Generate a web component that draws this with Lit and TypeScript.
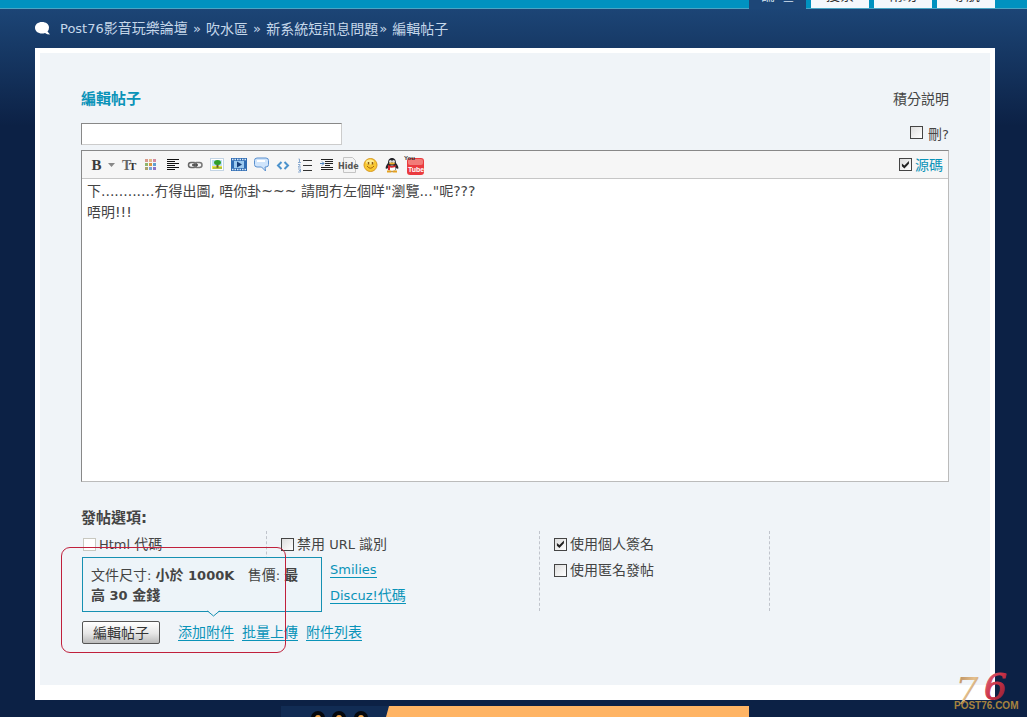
import { LitElement, html, css, svg } from "lit";
import { customElement, property } from "lit/decorators.js";

const palette = ["#d99a8a", "#e2b78a", "#d68ba0", "#8fb56a", "#d9953f", "#5f9fd0", "#a9a26c", "#79a5d8", "#8b76c4"];

const glyphs: Record<string, unknown> = {
  bold: svg`<text x="2.500" y="13" font-family="Liberation Serif, serif" font-weight="700" font-size="15" fill="#3c3c3c">B</text>`,
  arrow: svg`<path d="M0 6h7L3.500 10z" fill="#888"/>`,
  font: svg`<text x="1" y="13" font-family="Liberation Serif, serif" font-weight="700" font-size="14" fill="#666">T</text><text x="8" y="13" font-family="Liberation Serif, serif" font-weight="700" font-size="11" fill="#333">T</text>`,
  color: palette.map((c, i) => svg`<rect x=${2 + (i % 3) * 4} y=${2 + Math.floor(i / 3) * 4} width="3" height="3" fill=${c}/>`),
  align: svg`<path d="M2 2.500h12M2 4.500h8M2 6.500h12M2 8.500h8M2 10.500h12M2 12.500h8" stroke="#111" fill="none"/>`,
  link: svg`<rect x="1.500" y="5.500" width="8" height="5" rx="2.500" fill="none" stroke="#666" stroke-width="1.500"/><rect x="7" y="5.500" width="8" height="5" rx="2.500" fill="none" stroke="#777" stroke-width="1.500"/><path d="M5 8h6" stroke="#444" stroke-width="1.500"/>`,
  image: svg`<rect x="1.500" y="1.500" width="13" height="12" fill="#fff" stroke="#c3d4e4"/><rect x="3" y="3" width="10" height="6" fill="#bfe0f5"/><rect x="3" y="9" width="10" height="3" fill="#f1e34c"/><path d="M7.500 7h2v4h-2z" fill="#6d5a20"/><ellipse cx="8.500" cy="5.500" rx="3.500" ry="2.500" fill="#2f9f2b"/><path d="M4 11h9" stroke="#71a52e"/>`,
  video: svg`<rect x="0" y="1" width="16" height="13" fill="#2f6cb3"/><path d="M1 2.500h14M1 12.500h14" stroke="#d7e8f8" stroke-width="1.500" stroke-dasharray="1.500 1"/><rect x="3" y="4" width="10" height="7" fill="#9cc9ee"/><path d="M6 4.500l5 3-5 3z" fill="#173f7a"/>`,
  quote: svg`<path d="M4 1h9q2.500 0 2.500 2.500v4Q15.500 10 13 10h-1l.5 4L8.500 10H4Q1.500 10 1.500 7.500v-4Q1.500 1 4 1z" fill="#cfe4fb" stroke="#5a90cf"/><path d="M4 4h8" stroke="#fff" stroke-width="2"/>`,
  code: svg`<path d="M6.500 5L3 8.500l3.500 3.500M9.500 5L13 8.500 9.500 12" fill="none" stroke="#4b92cc" stroke-width="2"/>`,
  list: svg`<path d="M6 3.500h9M6 8.500h9M6 13.500h9" stroke="#333"/><path d="M1.500 2h1v3M1 5.500h3M1 7.500h2v1l-2 1.500h3M1 12h2.500v3H1M2 13.500h1" stroke="#8aaad0" fill="none"/>`,
  indent: svg`<path d="M2 2.500h12M6 4.500h8M6 6.500h8M6 8.500h5M2 10.500h12M2 12.500h12" stroke="#222"/><path d="M1 6.500h4M3 4.500l2 2-2 2" stroke="#4b83bd" fill="none"/>`,
  smile: svg`<circle cx="7.500" cy="8" r="6.500" fill="#f8c832" stroke="#d99a20"/><ellipse cx="7" cy="5" rx="4" ry="2.500" fill="#fdeb90"/><path d="M5.500 5v2.500M9.500 5v2.500" stroke="#8a5a10" stroke-width="1.500"/><path d="M4 9q3.500 4.500 7 0" stroke="#a8650c" fill="none"/>`,
  penguin: svg`<path d="M7 1C4 1 3 3.500 3 6 1 8.500 0 11 1 12l1.500-1Q4 15 7 15t4.500-4L13 12c1-1 0-3.500-2-6 0-2.500-1-5-4-5z" fill="#25252b"/><ellipse cx="7" cy="11.500" rx="3.500" ry="3" fill="#fff"/><circle cx="5.500" cy="4.500" r="1.500" fill="#ddd"/><circle cx="8.500" cy="4.500" r="1.500" fill="#ddd"/><ellipse cx="7" cy="6.500" rx="3" ry="1" fill="#efb12d"/><path d="M3 8q4 2 8 0l-.5 2q-3.500 1-5.500.5V13H3z" fill="#d8282d"/><path d="M2 14.500h4.500M7.500 14.500H12" stroke="#e6a11f" stroke-width="2"/>`,
};

@customElement("tool-icon")
class ToolIcon extends LitElement {
  @property() name = "";
  static styles = css`
    :host { display: block; height: 16px; }
    svg { display: block; overflow: visible; }
  `;
  render() {
    if (this.name === "hide")
      return html`<svg width="20" height="16" viewBox="0 0 20 16"><path d="M4.500 .5h9l3 3v12h-12z" fill="#f4f4f4" stroke="#c4c4c4"/><text x="-1" y="12" font-family="DejaVu Sans, sans-serif" font-weight="700" font-size="8" fill="#555">Hide</text></svg>`;
    if (this.name === "youtube")
      return html`<svg width="20" height="16" viewBox="0 0 20 16"><rect x="2" y="1" width="17" height="17" rx="3" fill="#ea3b3f"/><rect x="3" y="2" width="15" height="6" rx="2" fill="#f27c78"/><text x="-1" y="3" font-family="Liberation Sans, sans-serif" font-weight="700" font-size="6" fill="#333">You</text><text x="3" y="15" font-family="Liberation Sans, sans-serif" font-weight="700" font-size="7" fill="#fff">Tube</text></svg>`;
    return html`<svg width="16" height="16" viewBox="0 0 16 16">${glyphs[this.name]}</svg>`;
  }
}

const tools: [string, string][] = [
  ["font", "字體"], ["color", "顏色"], ["align", "對齊"], ["link", "鏈接"], ["image", "圖片"],
  ["video", "視頻"], ["quote", "引用"], ["code", "代碼"], ["list", "列表"], ["indent", "縮進"],
  ["hide", "隱藏"], ["smile", "表情"], ["penguin", "QQ"], ["youtube", "YouTube"],
];

@customElement("app-root")
class AppRoot extends LitElement {
  static styles = css`
    :host {
      display: flex; flex-direction: column; position: relative; min-height: 100vh; overflow: hidden;
      box-sizing: border-box; color: #444;
      font: 14px/20px "DejaVu Sans", "Noto Sans CJK TC", sans-serif;
      background: #0c2145 linear-gradient(#1c4576 9px, #0c2145 126px) no-repeat;
    }
    * { box-sizing: border-box; }
    .en { font-size: 13px; }
    a { color: #0a93b8; text-decoration: none; }
    .top {
      height: 9px; flex: none; overflow: hidden; display: flex; align-items: flex-end; justify-content: flex-end;
      gap: 5px; padding-right: 32px; background: linear-gradient(#0092c0 8px, #4aa5c4 8px);
    }
    .tab {
      width: 58px; height: 24px; margin-bottom: 1px; text-align: center; line-height: 22px;
      background: #f4f8fc; color: #333; flex: none;
    }
    .tab.on { width: 57px; height: 25px; margin-bottom: 0; background: #1d4677; color: #d5e4f2; }
    .crumbs { display: flex; align-items: center; height: 39px; padding-left: 35px; color: #c5d7ea; white-space: pre; }
    .crumbs a { color: inherit; }
    .crumbs svg { margin-right: 10px; }
    .sep { font-size: 13px; padding: 0 1px; }
    .card {
      margin: 0 32px 0 35px; border: 5px solid #fff; border-bottom-width: 15px; background: #f0f4f8;
      padding: 34px 41px 41px;
    }
    .row { display: flex; justify-content: space-between; align-items: center; }
    h1, h2 { margin: 0; font-size: 15px; line-height: 24px; }
    h1 { color: #0a93b8; }
    .plain { color: #444; }
    label { display: flex; align-items: center; gap: 3px; white-space: pre; }
    input[type="checkbox"] {
      appearance: none; margin: 0; width: 13px; height: 13px; flex: none; border: 1px solid #444;
      background: linear-gradient(135deg, #ddd, #fff); display: grid; place-items: center;
    }
    input[type="checkbox"]:checked::before {
      content: ""; width: 9px; height: 9px; background: #222;
      clip-path: polygon(10% 40%, 38% 62%, 88% 10%, 88% 42%, 38% 95%, 10% 70%);
    }
    input[type="checkbox"]:disabled { border-color: #c8c8c0; background: #fff; }
    .subject { margin-top: 12px; height: 22px; width: 261px; border: 1px solid; border-color: #888 #ccc #ccc #888; background: #fff; padding: 0 4px; }
    .titles { align-items: flex-start; }
    .del { margin-top: 13px; gap: 5px; height: 20px; }
    .del input { margin-bottom: 4px; }
    .editor { margin-top: 5px; border: 1px solid; border-color: #888 #bbb #bbb #888; background: #fff; }
    .bar { display: flex; align-items: center; height: 28px; padding: 0 5px 0 4px; border-bottom: 1px solid #c6c6c6; background: #f6f6f6; }
    .tool { width: 22px; height: 22px; border: 0; padding: 0; background: none; display: grid; place-items: center; }
    .drop { width: 10px; justify-content: start; overflow: hidden; }
    .source { margin-left: auto; color: #0a93b8; }
    textarea {
      display: block; width: 100%; height: 302px; border: 0; padding: 2px 5px; resize: none; outline: 0;
      background: #fff; color: #444; font: inherit; line-height: 21px;
    }
    h2 { margin-top: 24px; }
    .lower { position: relative; }
    .options { display: grid; grid-template-columns: 186px 273px 230px; margin-top: 1px; }
    .col { height: 80px; border-right: 1px dashed #c0c4cc; padding-left: 14px; }
    .col.first { padding-left: 2px; }
    .col label, .help { height: 26px; }
    .help { padding-left: 49px; line-height: 24px; }
    .u { border-bottom: 1px solid #0a93b8; line-height: 15px; }
    .actions { display: flex; align-items: center; gap: 8px; margin-top: 10px; height: 23px; }
    .submit {
      height: 23px; width: 78px; margin: 0 10px 0 1px; padding: 0; border: 1px solid #555; border-radius: 2px;
      background: linear-gradient(#fff, #e6e6e6 55%, #bbb); color: #333; font: inherit; line-height: 20px;
    }
    .tip {
      position: absolute; left: 1px; top: 26px; width: 240px; height: 55px; padding: 7px 16px 7px 8px; white-space: pre-wrap;
      border: 1px solid #1690b2; background: #edf4f9; line-height: 20px;
    }
    .tip span { line-height: 1; }
    .tip svg { position: absolute; left: 124px; top: 52px; }
    .mark { position: absolute; left: -20px; top: 16px; width: 225px; height: 106px; border: 1px solid #c0203c; border-radius: 9px; pointer-events: none; }
    .foot { flex: 1; min-height: 11px; margin: 6px 0 0 281px; width: 468px; display: flex; overflow: hidden; background: #112c54; }
    .foot svg { display: block; }
    .brand { position: absolute; right: 4px; bottom: 4px; }
  `;

  render() {
    return html`
      <nav class="top">
        <a class="tab on" href="#">論 壇</a><a class="tab" href="#">搜索</a><a class="tab" href="#">幫助</a><a class="tab" href="#">導航</a>
      </nav>
      <nav class="crumbs"><svg width="15" height="13" viewBox="0 0 15 13"><path d="M7 0c4 0 7 2.200 7 5.500q0 2.500-1.500 4L15 12.500q-3 0-5-1.500-1.500.5-3 .5C3 11.500 0 9 0 5.700S3 0 7 0z" fill="#fff"/></svg><a href="#"><span class="en">Post76</span>影音玩樂論壇</a><span class="sep"> » </span><a href="#">吹水區</a><span class="sep"> » </span><a href="#">新系統短訊息問題</a><span class="sep">» </span><span>編輯帖子</span></nav>
      <main class="card">
        <div class="row"><h1>編輯帖子</h1><a class="plain" href="#">積分説明</a></div>
        <div class="row titles">
          <input class="subject" type="text" aria-label="標題">
          <label class="del"><input type="checkbox"><span>刪<span class="en">?</span></span></label>
        </div>
        <section class="editor">
          <div class="bar">
            <button class="tool" aria-label="粗體"><tool-icon name="bold"></tool-icon></button>
            <button class="tool drop" aria-label="更多"><tool-icon name="arrow"></tool-icon></button>
            ${tools.map(([n, l]) => html`<button class="tool" aria-label=${l}><tool-icon name=${n}></tool-icon></button>`)}
            <label class="source"><input type="checkbox" checked>源碼</label>
          </div>
          <textarea aria-label="內容" spellcheck="false" .value=${'下............冇得出圖, 唔你卦~~~ 請問冇左個咩"瀏覽..."呢???\n唔明!!!'}></textarea>
        </section>
        <h2>發帖選項:</h2>
        <div class="lower">
          <div class="options">
            <div class="col first"><label><input type="checkbox" disabled><span><span class="en">Html </span>代碼</span></label></div>
            <div class="col">
              <label><input type="checkbox"><span>禁用<span class="en"> URL </span>識別</span></label>
              <div class="help"><a class="u en" href="#">Smilies</a></div>
              <div class="help"><a class="u" href="#"><span class="en">Discuz!</span>代碼</a></div>
            </div>
            <div class="col">
              <label><input type="checkbox" checked>使用個人簽名</label>
              <label><input type="checkbox">使用匿名發帖</label>
            </div>
          </div>
          <div class="actions">
            <button class="submit">編輯帖子</button>
            <a class="u" href="#">添加附件</a><a class="u" href="#">批量上傳</a><a class="u" href="#">附件列表</a>
          </div>
          <div class="tip">文件尺寸<span class="en">: </span><b>小於<span class="en"> 1000K</span></b>   售價<span class="en">: </span><b>最高<span class="en"> 30 </span>金錢</b><svg width="13" height="7" viewBox="0 0 13 7"><path d="M0 0h13L6.500 6z" fill="#edf4f9"/><path d="M.5 1L6.500 6l6-5" fill="none" stroke="#1690b2"/></svg></div>
          <div class="mark"></div>
        </div>
      </main>
      <footer class="foot">
        <svg width="468" height="11" viewBox="0 0 468 11">
          <path d="M108 0h360v11H105z" fill="#ffb464"/>
          ${[37, 58, 80].map((x) => svg`<circle cx=${x} cy="12" r="7" fill="#05070c"/><circle cx=${x} cy="12" r="3" fill="#f0a850"/>`)}
        </svg>
      </footer>
      <svg class="brand" width="70" height="42" viewBox="0 0 70 42" aria-hidden="true">
        <defs>
          <linearGradient id="g7" x1="0" y1="0" x2="1" y2="1"><stop offset="0" stop-color="#a87a50"/><stop offset=".5" stop-color="#e5c08d"/><stop offset="1" stop-color="#8a6342"/></linearGradient>
          <linearGradient id="g6" x1="0" y1="0" x2="1" y2="1"><stop offset="0" stop-color="#e5798a"/><stop offset=".5" stop-color="#ca3146"/><stop offset="1" stop-color="#7d1c2c"/></linearGradient>
        </defs>
        <g font-family="DejaVu Serif, serif" font-style="italic">
          <text x="2" y="33" font-size="37" fill="url(#g7)">7</text>
          <text x="31" y="28" font-size="36" fill="url(#g6)" stroke="url(#g6)">6</text>
        </g>
        <text x="1" y="38" font-family="Liberation Sans, sans-serif" font-weight="700" font-size="10" fill="#a5833f">POST76.COM</text>
      </svg>`;
  }
}
